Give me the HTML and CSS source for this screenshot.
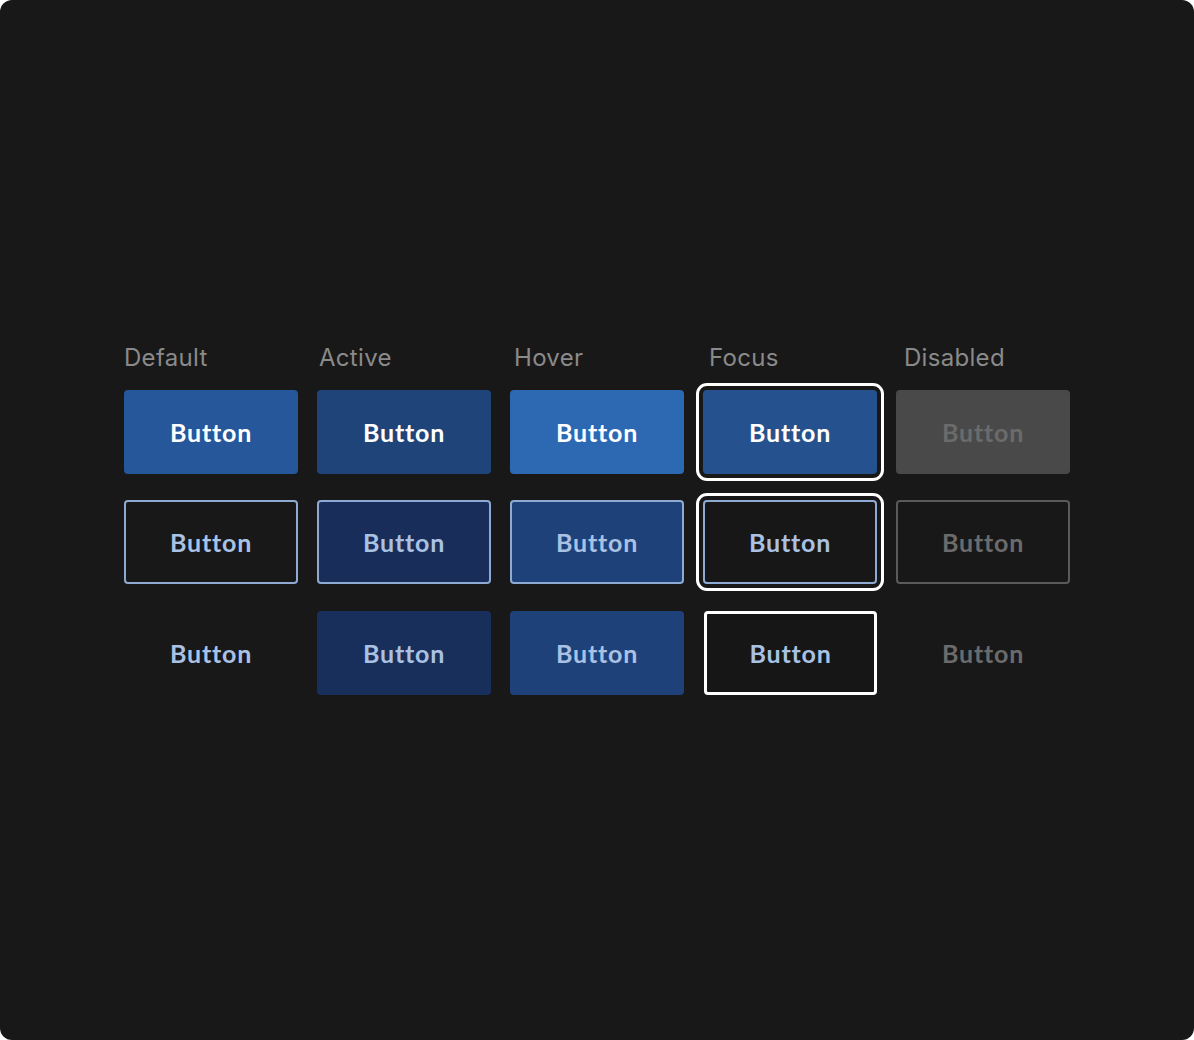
FILE: index.html
```html
<!DOCTYPE html>
<html lang="en">

<head>
    <meta charset="UTF-8">
    <meta name="viewport" content="width=device-width, initial-scale=1.0">
    <title>Button States</title>
    <link rel="stylesheet" href="styles.css">
</head>

<body>
    <div class="frame">
        <div class="board">
            <!--State labels-->
            <div class="labels">
                <p>Default</p>
                <p>Active</p>
                <p>Hover</p>
                <p>Focus</p>
                <p>Disabled</p>
            </div>
            <!--Buttons: primary, outline, ghost-->
            <div class="grid">
                <button class="btn primary">Button</button>
                <button class="btn primary active">Button</button>
                <button class="btn primary hover">Button</button>
                <button class="btn primary focus">Button</button>
                <button class="btn primary disabled">Button</button>

                <button class="btn outline">Button</button>
                <button class="btn outline active">Button</button>
                <button class="btn outline hover">Button</button>
                <button class="btn outline focus">Button</button>
                <button class="btn outline disabled">Button</button>

                <button class="btn ghost">Button</button>
                <button class="btn ghost active">Button</button>
                <button class="btn ghost hover">Button</button>
                <button class="btn ghost focus">Button</button>
                <button class="btn ghost disabled">Button</button>
            </div>
        </div>
    </div>
</body>

</html>
```

FILE: styles.css
```css
* {
    margin: 0;
    padding: 0;
    box-sizing: border-box;
}

body {
    background: #ffffff;
}

.frame {
    width: 1194px;
    height: 1040px;
    background: #181818;
    border-radius: 12px;
    display: flex;
    justify-content: center;
    align-items: center;
}

.board {
    width: 946px;
    margin-top: -1px;
}

.labels,
.grid {
    display: grid;
    grid-template-columns: repeat(5, 174px);
    column-gap: 19px;
}

/* labels sit on a slightly wider pitch than the buttons */
.labels {
    column-gap: 21px;
    margin-bottom: 19px;
}

.labels p {
    font-family: Inter, 'Liberation Sans', sans-serif;
    font-size: 24px;
    line-height: 26px;
    letter-spacing: 0.3px;
    color: #8a8a8a;
}

.grid {
    row-gap: 26.5px;
}

/* Base button */
.btn {
    height: 84px;
    border: none;
    border-radius: 4px;
    font-family: Lato, 'Open Sans', sans-serif;
    font-weight: 700;
    font-size: 25px;
    letter-spacing: 0.8px;
    background: transparent;
    color: #a9c1e3;
}

/* Primary */
.primary {
    background: #25579a;
    color: #ffffff;
}

.primary.active {
    background: #1f4479;
}

.primary.hover {
    background: #2d69b3;
}

.primary.focus {
    background: #25528f;
}

.primary.disabled {
    background: #494949;
    color: #6b6b6b;
}

/* Outline */
.outline {
    border: 2px solid #8eaad2;
}

.outline.active {
    background: #182d59;
}

.outline.hover {
    background: #1f4179;
}

.outline.focus {
    background: #171717;
}

.outline.disabled {
    border-color: #5a5a5a;
    color: #6b6b6b;
}

/* Ghost */
.ghost.active {
    background: #182e5b;
}

.ghost.hover {
    background: #1f4179;
}

.ghost.focus {
    border: 3px solid #ffffff;
    background: #161616;
    width: 173px;
    margin-left: 1px;
}

.ghost.disabled {
    color: #6b6b6b;
}

/* Focus ring */
.primary.focus,
.outline.focus {
    outline: 3px solid #ffffff;
    outline-offset: 4px;
}
```
